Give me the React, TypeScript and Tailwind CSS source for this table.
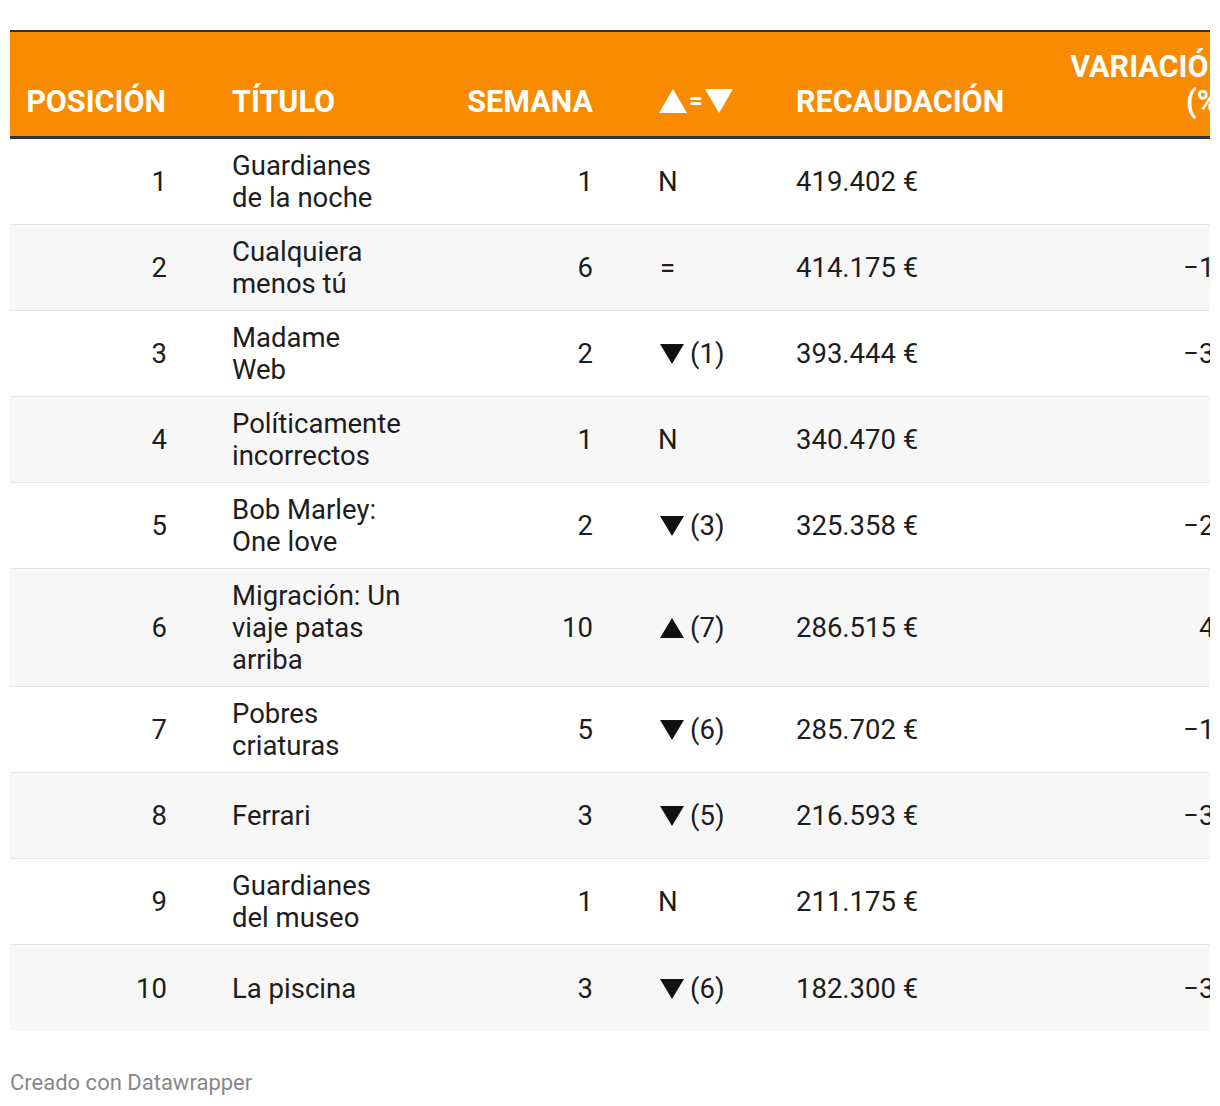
import React from 'react';

type Move = 'N' | '=' | { dir: 'up' | 'down'; n: number };

type Row = {
  pos: number;
  title: string[];
  week: number;
  move: Move;
  gross: string;
  change: string;
};

const rows: Row[] = [
  { pos: 1, title: ['Guardianes', 'de la noche'], week: 1, move: 'N', gross: '419.402 €', change: '' },
  { pos: 2, title: ['Cualquiera', 'menos tú'], week: 6, move: '=', gross: '414.175 €', change: '−12' },
  { pos: 3, title: ['Madame', 'Web'], week: 2, move: { dir: 'down', n: 1 }, gross: '393.444 €', change: '−35' },
  { pos: 4, title: ['Políticamente', 'incorrectos'], week: 1, move: 'N', gross: '340.470 €', change: '' },
  { pos: 5, title: ['Bob Marley:', 'One love'], week: 2, move: { dir: 'down', n: 3 }, gross: '325.358 €', change: '−28' },
  { pos: 6, title: ['Migración: Un', 'viaje patas', 'arriba'], week: 10, move: { dir: 'up', n: 7 }, gross: '286.515 €', change: '46' },
  { pos: 7, title: ['Pobres', 'criaturas'], week: 5, move: { dir: 'down', n: 6 }, gross: '285.702 €', change: '−14' },
  { pos: 8, title: ['Ferrari'], week: 3, move: { dir: 'down', n: 5 }, gross: '216.593 €', change: '−33' },
  { pos: 9, title: ['Guardianes', 'del museo'], week: 1, move: 'N', gross: '211.175 €', change: '' },
  { pos: 10, title: ['La piscina'], week: 3, move: { dir: 'down', n: 6 }, gross: '182.300 €', change: '−39' },
];

// columns: posición | título | semana | ▲=▼ | recaudación | variación
const cols = 'grid grid-cols-[206px_196px_197px_171px_260px_206px]';

function Tri({ dir, w, h, className }: { dir: 'up' | 'down'; w: number; h: number; className?: string }) {
  return (
    <svg width={w} height={h} viewBox="0 0 24 20" preserveAspectRatio="none" className={className}>
      {dir === 'up' ? <polygon points="12,0 24,20 0,20" fill="currentColor" /> : <polygon points="0,0 24,0 12,20" fill="currentColor" />}
    </svg>
  );
}

function MoveCell({ move }: { move: Move }) {
  if (move === 'N') return <span>N</span>;
  if (move === '=') return <span className="pl-[2px]">=</span>;
  return (
    <span className="flex items-center gap-[6px] pl-[2px]">
      <Tri dir={move.dir} w={24} h={20} className="text-[#111]" />
      <span>({move.n})</span>
    </span>
  );
}

export default function App() {
  return (
    <div
      className="min-h-screen bg-white px-[10px] pt-[30px]"
      style={{ fontFamily: 'Roboto, "Liberation Sans", sans-serif' }}
    >
      <div className="w-[1200px] overflow-hidden">
        <div className="w-[1236px]">
          {/* Header */}
          <div className={`${cols} h-[109px] items-end border-t-2 border-b-[3px] border-[#333] bg-[#f88b00] pb-[17px] text-[30.5px] font-bold leading-[35px] text-white`}>
            <div className="pr-[50px] text-right">POSICIÓN</div>
            <div className="pl-[16px]">TÍTULO</div>
            <div className="pr-[16px] text-right">SEMANA</div>
            <div className="flex items-center gap-[2px] pb-[6px] pl-[50px]">
              <Tri dir="up" w={28} h={24} />
              <span className="text-[24px] leading-none">=</span>
              <Tri dir="down" w={28} h={24} />
            </div>
            <div className="pl-[16px]">RECAUDACIÓN</div>
            <div className="pr-[16px] text-right">
              VARIACIÓN
              <br />
              (%)
            </div>
          </div>

          {/* Body */}
          <div className="text-[27.5px] leading-[32px] text-[#1d1d1d]">
            {rows.map((r, i) => (
              <div
                key={r.pos}
                className={`${cols} min-h-[86px] items-center pt-[11px] pb-[10px] ${i % 2 === 1 ? 'bg-[#f7f7f7]' : 'bg-white'} ${i < rows.length - 1 ? 'border-b border-[#e6e6e6]' : ''}`}
              >
                <div className="pr-[49px] text-right">{r.pos}</div>
                <div className="pl-[16px]">
                  {r.title.map((t) => (
                    <div key={t}>{t}</div>
                  ))}
                </div>
                <div className="pr-[16px] text-right">{r.week}</div>
                <div className="pl-[49px]">
                  <MoveCell move={r.move} />
                </div>
                <div className="pl-[16px]">{r.gross}</div>
                <div className="pr-[16px] text-right">{r.change}</div>
              </div>
            ))}
          </div>
        </div>
      </div>

      <p className="mt-[39px] text-[22px] leading-[26px] text-[#888]">Creado con Datawrapper</p>
    </div>
  );
}
